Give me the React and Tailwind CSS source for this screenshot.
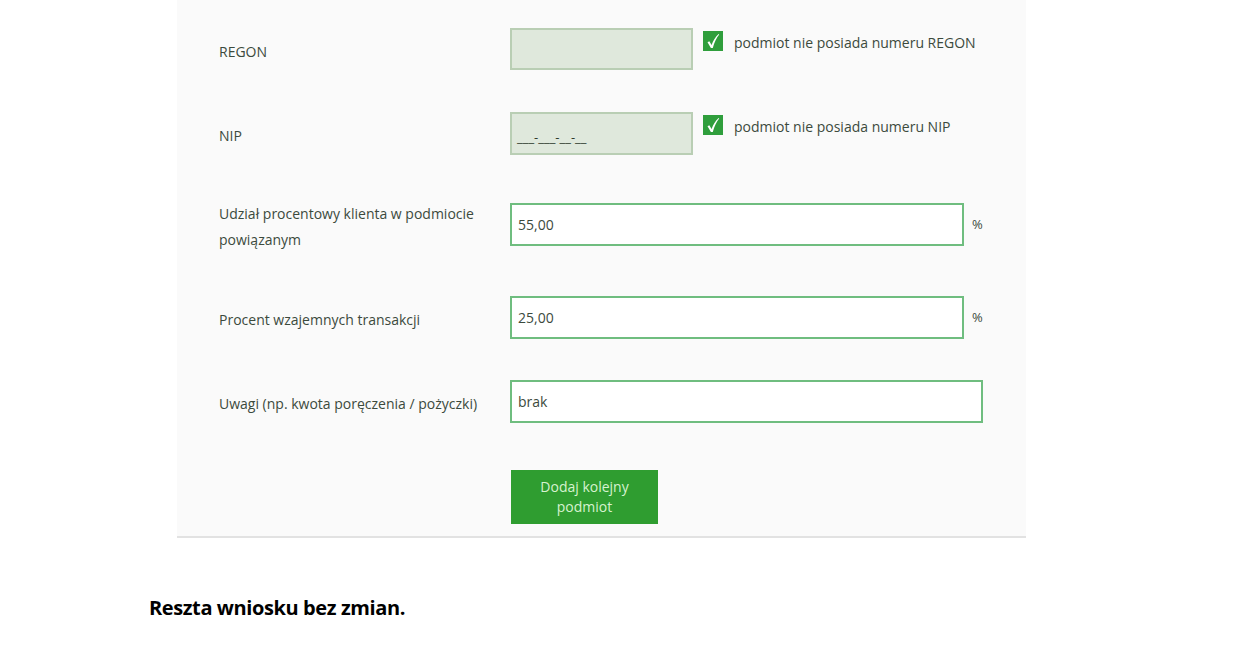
import React from "react";

const font = { fontFamily: '"Open Sans", "Noto Sans", sans-serif' };

function Check() {
  return (
    <div className="w-[20px] h-[20px] bg-[#2f9e3c] flex items-center justify-center shrink-0">
      <svg width="14" height="16" viewBox="0 0 14 16">
        <path d="M1.5 9.2 L3.3 8.3 L5.6 12 C7.2 7.6 9.4 3.8 12.6 1 L13.2 1.6 C10.4 5 8.3 9.4 6.8 15 L4.9 15 Z" fill="#ffffff" />
      </svg>
    </div>
  );
}

function Label({ children, className = "" }) {
  return (
    <div className={"w-[291px] pr-[20px] text-[14px] leading-[26px] text-[#3c4a3d] shrink-0 " + className}>
      {children}
    </div>
  );
}

export default function App() {
  return (
    <div className="min-h-screen bg-white" style={font}>
      <div className="ml-[177px] w-[849px] bg-[#fafafa] border-b-2 border-[#e2e2e2] pl-[42px] pt-[28px] pb-[12px]">
        {/* REGON */}
        <div className="flex items-start">
          <Label className="mt-[11px]">REGON</Label>
          <div className="w-[183px] h-[42px] bg-[#dfe8dc] border-2 border-[#b9ceb4] shrink-0" />
          <div className="flex items-start ml-[10px] mt-[3px]">
            <Check />
            <span className="ml-[11px] mt-[2px] text-[14px] leading-[20px] text-[#3c4a3d]">podmiot nie posiada numeru REGON</span>
          </div>
        </div>

        {/* NIP */}
        <div className="flex items-start mt-[42px]">
          <Label className="mt-[11px] -mb-[2px]">NIP</Label>
          <div className="w-[183px] h-[43px] bg-[#dfe8dc] border-2 border-[#b9ceb4] flex items-center pl-[5px] pt-[8px] text-[13px] text-[#2d3a2d] shrink-0">
            ___-___-__-__
          </div>
          <div className="flex items-start ml-[10px] mt-[3px]">
            <Check />
            <span className="ml-[11px] mt-[2px] text-[14px] leading-[20px] text-[#3c4a3d]">podmiot nie posiada numeru NIP</span>
          </div>
        </div>

        {/* Udział */}
        <div className="flex items-start mt-[48px]">
          <Label className="-mt-[2px] -mb-[7px]">Udział procentowy klienta w podmiocie powiązanym</Label>
          <div className="w-[454px] h-[43px] bg-white border-2 border-[#6fbd7f] flex items-center pl-[6px] text-[14px] text-[#3c4a3d] shrink-0">
            55,00
          </div>
          <span className="ml-[8px] mt-[12px] text-[13px] leading-[18px] text-[#3c4a3d]">%</span>
        </div>

        {/* Procent */}
        <div className="flex items-start mt-[50px]">
          <Label className="mt-[11px] -mb-[2px]">Procent wzajemnych transakcji</Label>
          <div className="w-[454px] h-[43px] bg-white border-2 border-[#6fbd7f] flex items-center pl-[6px] text-[14px] text-[#3c4a3d] shrink-0">
            25,00
          </div>
          <span className="ml-[8px] mt-[12px] text-[13px] leading-[18px] text-[#3c4a3d]">%</span>
        </div>

        {/* Uwagi */}
        <div className="flex items-start mt-[41px]">
          <Label className="mt-[11px] -mb-[2px]">Uwagi (np. kwota poręczenia / pożyczki)</Label>
          <div className="w-[473px] h-[43px] bg-white border-2 border-[#6fbd7f] flex items-center pl-[6px] text-[14px] text-[#3c4a3d] shrink-0">
            brak
          </div>
        </div>

        {/* Button */}
        <div className="flex mt-[47px]">
          <div className="w-[292px] shrink-0" />
          <button className="w-[147px] h-[54px] bg-[#2f9d30] text-[#d6f2cf] text-[14px] leading-[20px] text-center">
            Dodaj kolejny
            <br />
            podmiot
          </button>
        </div>
      </div>

      <p
        className="ml-[149px] mt-[56px] text-[20px] leading-[28px] font-bold text-black tracking-[-0.4px]"
        style={{ fontFamily: '"Open Sans", "Noto Sans", sans-serif' }}
      >
        Reszta wniosku bez zmian.
      </p>
    </div>
  );
}
